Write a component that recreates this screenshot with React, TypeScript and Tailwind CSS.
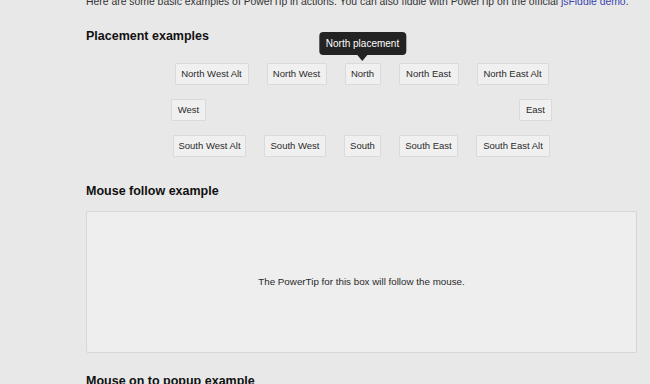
export default function App() {
  const topRow = [
    { label: "North West Alt", w: "w-[74px]" },
    { label: "North West", w: "w-[60px]" },
    { label: "North", w: "w-[36px]", tip: "North placement" },
    { label: "North East", w: "w-[60px]" },
    { label: "North East Alt", w: "w-[72px]" },
  ];
  const bottomRow = [
    { label: "South West Alt", w: "w-[73px]" },
    { label: "South West", w: "w-[62px]" },
    { label: "South", w: "w-[37px]" },
    { label: "South East", w: "w-[59px]" },
    { label: "South East Alt", w: "w-[74px]" },
  ];

  return (
    <div className="h-[384px] overflow-hidden bg-[#e8e8e8] text-[#333] font-['Liberation_Sans',Arial,sans-serif]">
      <div className="ml-[86px] w-[551px]">
        <p className="-mt-[4px] text-[10.4px] leading-[12px] whitespace-nowrap">
          Here are some basic examples of PowerTip in actions. You can also fiddle with PowerTip on the official{" "}
          <a className="text-[#3a44b0]">jsFiddle demo</a>.
        </p>

        <h2 className="mt-[21px] text-[12.5px] leading-[15px] font-bold text-[#111]">Placement examples</h2>

        <div className="mt-[19px]">
          <div className="flex justify-center gap-[18px]">
            {topRow.map((b) => (
              <div key={b.label} className="relative">
                <Btn label={b.label} w={b.w} />
                {b.tip && (
                  <div className="absolute bottom-[calc(100%+8px)] left-1/2 -translate-x-1/2 whitespace-nowrap rounded-[4px] bg-[#232323] px-[7px] py-[5px] text-[10px] leading-[13px] text-white">
                    {b.tip}
                    <div className="absolute left-1/2 top-full -translate-x-1/2 border-x-[5px] border-t-[6px] border-x-transparent border-t-[#232323]" />
                  </div>
                )}
              </div>
            ))}
          </div>
          <div className="mx-auto mt-[14px] flex w-[381px] justify-between">
            <Btn label="West" w="w-[35px]" />
            <Btn label="East" w="w-[33px]" />
          </div>
          <div className="mt-[14px] flex justify-center gap-[18px]">
            {bottomRow.map((b) => (
              <Btn key={b.label} label={b.label} w={b.w} />
            ))}
          </div>
        </div>

        <h2 className="mt-[27px] text-[12.5px] leading-[15px] font-bold text-[#111]">Mouse follow example</h2>

        <div className="mt-[12px] flex h-[142px] items-center justify-center rounded-[2px] border border-[#d6d6d6] bg-[#eeeeee] text-[9.8px] text-[#2a2a2a]">
          The PowerTip for this box will follow the mouse.
        </div>

        <h2 className="mt-[21px] text-[12.5px] leading-[15px] font-bold text-[#111]">Mouse on to popup example</h2>
      </div>
    </div>
  );
}

function Btn({ label, w }: { label: string; w: string }) {
  return (
    <button
      className={`${w} flex h-[22px] items-center justify-center whitespace-nowrap rounded-[1px] border border-[#dadada] bg-[#f0f0f0] text-[9.5px] text-[#2a2a2a]`}
    >
      {label}
    </button>
  );
}
